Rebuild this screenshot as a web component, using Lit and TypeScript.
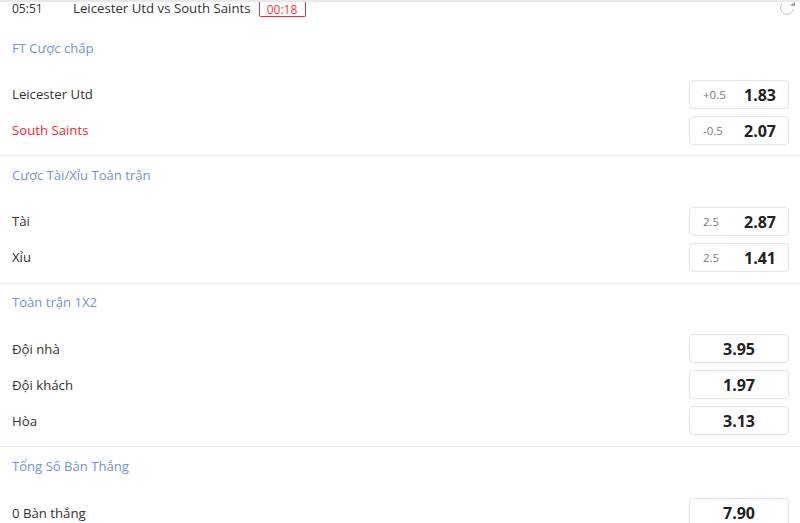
import { LitElement, html, css } from "lit";
import { customElement } from "lit/decorators.js";

type Row = { name: string; odd: string; line?: string; red?: boolean };
type Section = { title: string; rows: Row[]; cls: string };

const SECTIONS: Section[] = [
  { title: "FT Cược chấp", cls: "first lift", rows: [
    { name: "Leicester Utd", line: "+0.5", odd: "1.83" },
    { name: "South Saints", line: "-0.5", odd: "2.07", red: true },
  ]},
  { title: "Cược Tài/Xỉu Toàn trận", cls: "lift tall", rows: [
    { name: "Tài", line: "2.5", odd: "2.87" },
    { name: "Xỉu", line: "2.5", odd: "1.41" },
  ]},
  { title: "Toàn trận 1X2", cls: "pull tall", rows: [
    { name: "Đội nhà", odd: "3.95" },
    { name: "Đội khách", odd: "1.97" },
    { name: "Hòa", odd: "3.13" },
  ]},
  { title: "Tổng Số Bàn Thắng", cls: "", rows: [
    { name: "0 Bàn thắng", odd: "7.90" },
  ]},
];

@customElement("app-root")
export class AppRoot extends LitElement {
  static styles = css`
    :host {
      display: block;
      width: 800px;
      height: 523px;
      overflow: hidden;
      background: #fff;
      font-family: "Open Sans", "Noto Sans", sans-serif;
      font-size: 13px;
      color: #333;
    }
    .top {
      height: 17px;
      border-top: 2px solid #e9e9e9;
      display: flex;
      align-items: flex-start;
      padding-left: 12px;
      position: relative;
    }
    .time { width: 61px; font-size: 12px; line-height: 14px; margin-top: 0; }
    .match { font-size: 13.22px; line-height: 14px; margin-top: -1px; }
    .badge {
      margin-left: 8px;
      width: 47px;
      height: 15px;
      box-sizing: border-box;
      border: 1px solid #e8303a;
      border-top: none;
      border-radius: 0 0 2px 2px;
      color: #fb3a46;
      font-size: 12px;
      display: flex;
      align-items: center;
      justify-content: center;
    }
    .refresh { position: absolute; left: 779px; top: 0; width: 16px; height: 14px; }
    .section { border-bottom: 1px solid #eeeeee; padding: 0 12px 10px; }
    .section.first { padding-top: 10px; }
    .section.tall { padding-bottom: 11px; }
    .section.pull .title { margin-top: -1px; }
    .title {
      height: 38px;
      line-height: 38px;
      color: #7692d0;
      font-size: 13.1px;
      margin-bottom: 13px;
    }
    .rows { display: flex; flex-direction: column; gap: 7px; }
    .row { display: flex; align-items: center; justify-content: space-between; height: 29px; }
    .name { font-size: 13.2px; }
    .lift .name { padding-bottom: 2px; }
    .red .name { color: #fa1e2c; }
    .btn {
      box-sizing: border-box;
      width: 100px;
      height: 29px;
      border: 1px solid #e4e4e4;
      border-radius: 4px;
      display: flex;
      align-items: center;
      justify-content: center;
      margin-right: -1px;
      background: #fff;
    }
    .btn.split { justify-content: space-between; padding: 0 12px 0 13px; }
    .line { font-size: 11.5px; color: #7a7a7a; }
    .odd { font-size: 16px; font-weight: 700; color: #222; }
  `;

  render() {
    return html`
      <div class="top">
        <span class="time">05:51</span>
        <span class="match">Leicester Utd vs South Saints</span>
        <span class="badge">00:18</span>
        <svg class="refresh" viewBox="0 0 16 14" fill="none">
          <path d="M3 1.8A6.5 6.5 0 1 0 14.4 7" stroke="#c4c4c4" stroke-width="1" />
          <path d="M11 3.5L16 0V4Z" fill="#9a9a9a" />
        </svg>
      </div>
      ${SECTIONS.map((s) => html`
        <div class="section ${s.cls}">
          <div class="title">${s.title}</div>
          <div class="rows">
            ${s.rows.map((r) => html`
              <div class="row ${r.red ? "red" : ""}">
                <span class="name">${r.name}</span>
                <div class="btn ${r.line ? "split" : ""}">
                  ${r.line ? html`<span class="line">${r.line}</span>` : ""}
                  <span class="odd">${r.odd}</span>
                </div>
              </div>
            `)}
          </div>
        </div>
      `)}
    `;
  }
}
